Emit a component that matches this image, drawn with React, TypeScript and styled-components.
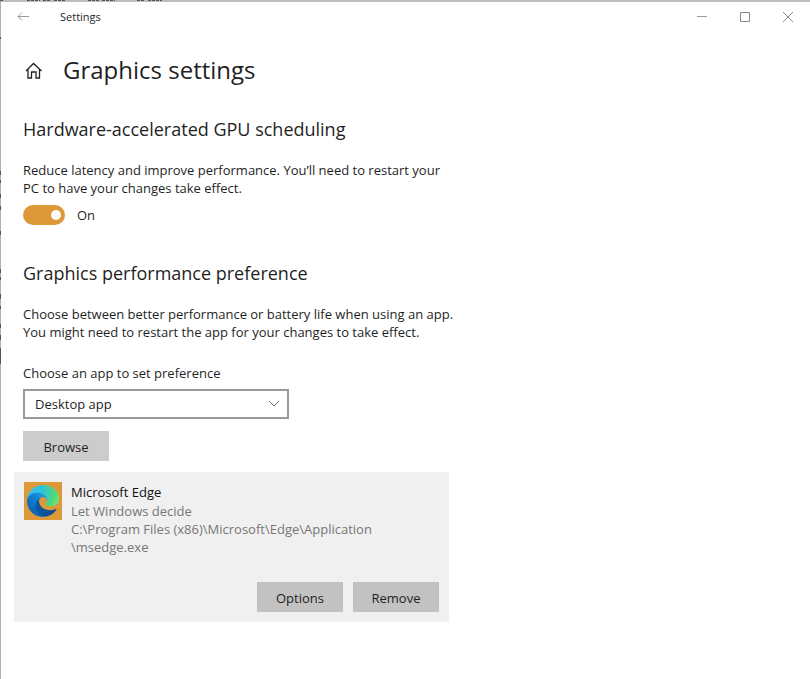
import React, { useState } from "react";
import styled, { createGlobalStyle } from "styled-components";

const GlobalStyle = createGlobalStyle`
  * { box-sizing: border-box; }
  html, body { margin: 0; background: #fff; }
  body, button, select {
    font-family: "Open Sans", "Noto Sans", sans-serif;
    font-size: 13px;
    line-height: 18px;
    color: #1f1f1f;
  }
  h1, h2, p { margin: 0; font-weight: 400; }
`;

const Window = styled.div`
  position: relative;
  min-height: 100vh;
  border-top: 2px solid #bdbdbd;
  border-left: 1px solid #b0b0b0;
  background: #fff;
`;

const Backdrop = styled.svg`
  position: absolute;
  top: -2px;
  left: -1px;
`;

const TitleBar = styled.header`
  display: flex;
  align-items: center;
  height: 30px;
  padding-right: 1px;
`;

const BackButton = styled.button`
  display: grid;
  place-items: center;
  width: 44px;
  height: 30px;
  padding: 0;
  border: 0;
  background: none;
`;

const WindowTitle = styled.span`
  flex: 1;
  padding-left: 15px;
  font-size: 11px;
`;

const Caption = styled.button`
  display: grid;
  place-items: center;
  width: 43px;
  height: 30px;
  padding: 0;
  border: 0;
  background: none;
`;

const Content = styled.main`
  padding: 16px 22px 56px;
`;

const PageHeading = styled.div`
  display: flex;
  align-items: center;
  gap: 20px;
  height: 44px;
`;

const PageTitle = styled.h1`
  font-size: 24px;
  line-height: 44px;
`;

const Section = styled.section<{ $top: number }>`
  margin-top: ${(p) => p.$top}px;
`;

const SectionTitle = styled.h2`
  font-size: 18px;
  line-height: 24px;
`;

const Description = styled.p`
  max-width: 480px;
  margin-top: 20px;
`;

const ToggleLabel = styled.label`
  display: flex;
  align-items: center;
  gap: 12px;
  width: fit-content;
  margin-top: 8px;
`;

const Toggle = styled.input`
  appearance: none;
  display: flex;
  align-items: center;
  width: 42px;
  height: 20px;
  margin: 0;
  padding: 0 4px;
  border-radius: 10px;
  background: #dd9838;
  &::before {
    content: "";
    width: 10px;
    height: 10px;
    border-radius: 50%;
    background: #fff;
    margin-left: auto;
  }
  &:not(:checked) { background: #999; }
  &:not(:checked)::before { margin-left: 0; }
`;

const FieldLabel = styled.label`
  display: block;
  margin-top: 23px;
`;

const SelectBox = styled.div`
  display: grid;
  width: 266px;
  margin-top: 7px;
  align-items: center;
  & > * { grid-area: 1 / 1; }
  & > svg { justify-self: end; margin-right: 9px; pointer-events: none; }
`;

const Select = styled.select`
  appearance: none;
  width: 100%;
  height: 30px;
  padding: 0 32px 0 10px;
  border: 2px solid #999;
  border-radius: 0;
  background: #fff;
`;

const Button = styled.button<{ $tone: string }>`
  width: 86px;
  height: 30px;
  padding: 2px 0 0;
  border: 0;
  background: ${(p) => p.$tone};
`;

const BrowseRow = styled.div`
  display: flex;
  margin-top: 12px;
`;

const AppCard = styled.article`
  max-width: 435px;
  margin: 11px 0 0 -9px;
  padding: 10px;
  background: #f0f0f0;
`;

const AppInfo = styled.div`
  display: flex;
  gap: 9px;
`;

const AppIcon = styled.div`
  display: grid;
  flex: none;
  place-items: center;
  width: 38px;
  height: 38px;
  background: #dd9838;
`;

const AppText = styled.div`
  min-width: 0;
  padding-top: 1px;
`;

const AppLine = styled.p<{ $strong?: boolean }>`
  color: ${(p) => (p.$strong ? "#111" : "#777")};
  line-height: ${(p) => (p.$strong ? 19 : 18)}px;
`;

const AppActions = styled.div`
  display: flex;
  justify-content: flex-end;
  gap: 10px;
  margin-top: 26px;
`;

const EdgeLogo = () => (
  <svg width="32" height="32" viewBox="0 0 256 256" aria-hidden="true">
    <defs>
      <linearGradient id="edgeBase" x1="63" y1="178" x2="241" y2="178" gradientUnits="userSpaceOnUse">
        <stop offset="0" stopColor="#0c59a4" />
        <stop offset="1" stopColor="#114a8b" />
      </linearGradient>
      <linearGradient id="edgeWave" x1="160" y1="100" x2="46" y2="225" gradientUnits="userSpaceOnUse">
        <stop offset="0" stopColor="#1b9de2" />
        <stop offset=".4" stopColor="#1482d2" />
        <stop offset="1" stopColor="#0a65b5" />
      </linearGradient>
      <radialGradient id="edgeTop" cx="0" cy="0" r="1" gradientTransform="matrix(0 230 -250 0 20 45)" gradientUnits="userSpaceOnUse">
        <stop offset="0" stopColor="#35c1f1" />
        <stop offset=".4" stopColor="#2fc2df" />
        <stop offset=".8" stopColor="#4fd67a" />
        <stop offset="1" stopColor="#66e87e" />
      </radialGradient>
    </defs>
    <path fill="url(#edgeBase)" d="M231 190.500c-3.400 1.800-6.900 3.400-10.500 4.700a101.700 101.700 0 0 1-35.900 6.500c-47.300 0-88.500-32.500-88.500-74.300 0-11.900 6.700-22.300 16.200-27.900-42.800 1.800-53.800 46.400-53.800 72.500 0 74 68.100 81.400 82.800 81.400 7.900 0 19.800-2.300 27-4.600l1.300-.4a128.300 128.300 0 0 0 66.600-52.800 4 4 0 0 0-5.200-5.100z" />
    <path fill="url(#edgeWave)" d="M105.700 241.400a79.200 79.200 0 0 1-22.700-21.300 80.700 80.700 0 0 1 29.500-120c3.100-1.500 8.500-4.100 15.600-4a32.400 32.400 0 0 1 25.700 13 31.900 31.900 0 0 1 6.300 18.700c0-.2 24.500-79.600-80-79.600C36.200 48.200 0 89.900 0 126.500a130 130 0 0 0 12.100 56 128 128 0 0 0 156.400 67 75.500 75.500 0 0 1-62.800-8.100z" />
    <path fill="url(#edgeTop)" d="M152.300 148.900c-.8 1-3.300 2.500-3.300 5.700 0 2.600 1.700 5.200 4.800 7.300 14.500 10.100 41.900 8.800 42 8.800 10.700 0 21.300-2.900 30.500-8.400a61.900 61.900 0 0 0 30.400-53.300c.3-22.400-8-37.300-11.300-43.900C224.100 23.800 178.800 0 128 0A128 128 0 0 0 0 126.200c.5-36.500 36.800-66 80-66 3.500 0 23.500.3 42 10 16.300 8.600 24.900 19 30.900 29.200 6.200 10.700 7.300 24.200 7.300 29.500 0 5.400-2.700 13.300-7.900 20z" />
  </svg>
);

export default function App() {
  const [enabled, setEnabled] = useState(true);
  return (
    <>
      <GlobalStyle />
      <Window>
        <Backdrop width="170" height="2" aria-hidden="true">
          <path d="M0 .5h4M27 .5h13M43 .5h8M54 .5h12M88 .5h11M102 .5h13M137 .5h8M148 .5h14" stroke="#555" strokeDasharray="3 1" />
        </Backdrop>
        <Backdrop width="1" height="364" aria-hidden="true">
          <path d="M.5 37v2M.5 171v4M.5 180v3M.5 194v4M.5 206v4M.5 231v4M.5 269v4M.5 277v3M.5 294v5M.5 306v3M.5 324v4M.5 335v5M.5 348v16" stroke="#555" />
        </Backdrop>
        <TitleBar>
          <BackButton aria-label="Back">
            <svg width="12" height="10" viewBox="0 0 12 10" fill="none" stroke="#999">
              <path d="M12 4.500H1M5 .5l-4 4 4 4" />
            </svg>
          </BackButton>
          <WindowTitle>Settings</WindowTitle>
          <Caption aria-label="Minimize">
            <svg width="10" height="10" stroke="#999"><path d="M0 4.500h10" /></svg>
          </Caption>
          <Caption aria-label="Maximize">
            <svg width="10" height="10" fill="none" stroke="#888"><path d="M.5 .5h9v9h-9z" /></svg>
          </Caption>
          <Caption aria-label="Close">
            <svg width="10" height="10" stroke="#888"><path d="M0 0l10 10M10 0L0 10" /></svg>
          </Caption>
        </TitleBar>
        <Content>
          <PageHeading>
            <svg width="20" height="20" viewBox="0 0 20 20" fill="none" stroke="#222" strokeWidth="1.300" aria-hidden="true">
              <path d="M3 11l7.500-7.500L18.500 11M5 9.500v8.500h3.500v-6h4.500v6h3.500V9.500" />
            </svg>
            <PageTitle>Graphics settings</PageTitle>
          </PageHeading>
          <Section $top={25}>
            <SectionTitle>Hardware-accelerated GPU scheduling</SectionTitle>
            <Description>
              Reduce latency and improve performance. You’ll need to restart your
              <br />
              PC to have your changes take effect.
            </Description>
            <ToggleLabel>
              <Toggle type="checkbox" role="switch" checked={enabled} onChange={(e) => setEnabled(e.target.checked)} />
              {enabled ? "On" : "Off"}
            </ToggleLabel>
          </Section>
          <Section $top={36}>
            <SectionTitle>Graphics performance preference</SectionTitle>
            <Description>
              Choose between better performance or battery life when using an app.
              <br />
              You might need to restart the app for your changes to take effect.
            </Description>
            <FieldLabel htmlFor="app-kind">Choose an app to set preference</FieldLabel>
            <SelectBox>
              <Select id="app-kind">
                <option>Desktop app</option>
              </Select>
              <svg width="12" height="8" viewBox="0 0 12 8" fill="none" stroke="#777" aria-hidden="true">
                <path d="M1 1l5 5 5-5" />
              </svg>
            </SelectBox>
            <BrowseRow>
              <Button $tone="#cccccc">Browse</Button>
            </BrowseRow>
            <AppCard>
              <AppInfo>
                <AppIcon>
                  <EdgeLogo />
                </AppIcon>
                <AppText>
                  <AppLine $strong>Microsoft Edge</AppLine>
                  <AppLine>Let Windows decide</AppLine>
                  <AppLine>
                    C:\Program Files (x86)\Microsoft\Edge\Application
                    <br />
                    \msedge.exe
                  </AppLine>
                </AppText>
              </AppInfo>
              <AppActions>
                <Button $tone="#c2c2c2">Options</Button>
                <Button $tone="#c2c2c2">Remove</Button>
              </AppActions>
            </AppCard>
          </Section>
        </Content>
      </Window>
    </>
  );
}
